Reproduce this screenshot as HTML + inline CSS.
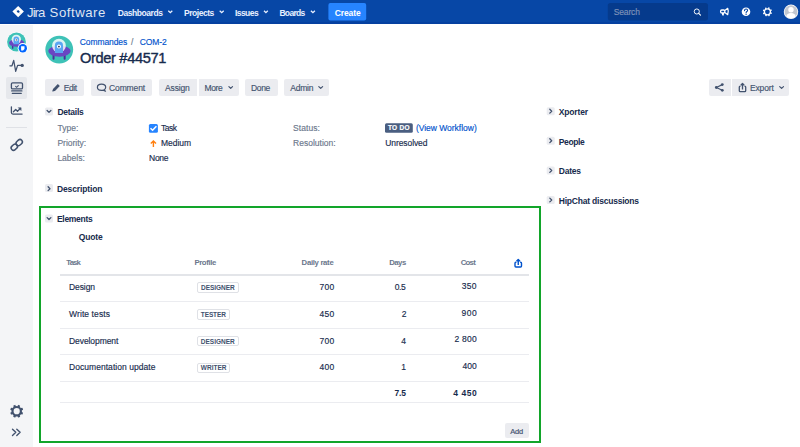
<!DOCTYPE html>
<html><head><meta charset="utf-8">
<style>
*{box-sizing:border-box;margin:0;padding:0}
html,body{width:800px;height:447px;overflow:hidden;background:#fff;font-family:"Liberation Sans",sans-serif;color:#172B4D}
.t{position:absolute;white-space:nowrap}
.r{position:absolute}
.btn{position:absolute;top:79px;height:17px;background:#EBECF0;border-radius:2px}
.chev{position:absolute;width:8px;height:8px;background:#EBECF0;border-radius:1.5px}
.hr{position:absolute;left:60px;width:468.5px;height:1px;background:#EBECF0}
.lz{position:absolute;left:197.3px;height:10.6px;border:1px solid #DFE1E6;border-radius:2px;background:#fff}
svg{position:absolute;overflow:visible}
</style></head><body>
<!-- nav -->
<div class="r" style="left:0;top:0;width:800px;height:24px;background:#0747A6"></div>
<div class="r" style="left:0;top:22.3px;width:800px;height:1.5px;background:#0540A0"></div>
<svg style="left:0;top:0" width="800" height="24">
  <path d="M18.15 5.9 L23.9 11.55 L18.15 17.2 L12.4 11.55 Z M18.2 9.95 L16.6 11.5 L18.2 13.05 L19.8 11.5 Z" fill="#fff" fill-rule="evenodd"/><path d="M15.3 8.7 L18.2 11.5 L21 14.4" stroke="#0747A6" stroke-opacity="0.18" stroke-width="0.8"/>
  <path d="M168.3 10.7 L170.3 12.7 L172.3 10.7 M219.7 10.7 L221.7 12.7 L223.7 10.7 M264 10.7 L265.9 12.6 L267.8 10.7 M310.9 10.7 L312.9 12.7 L314.9 10.7" stroke="#E9F0FF" stroke-width="1.3" fill="none"/>
  <rect x="328.4" y="3" width="37.8" height="17.5" rx="2" fill="#2684FF"/>
  <rect x="607.8" y="3" width="100.2" height="17.5" rx="2.5" fill="#053A8C"/>
  <circle cx="696.8" cy="11.5" r="2.55" stroke="#fff" stroke-width="0.95" fill="none"/>
  <path d="M698.7 13.4 L700.5 15.2" stroke="#fff" stroke-width="1.15" stroke-linecap="round"/>
  <!-- megaphone -->
  <rect x="720.6" y="10" width="4.2" height="2.9" rx="1.2" stroke="#fff" stroke-width="1.3" fill="none"/>
  <path d="M721.6 12.9 L722.3 15.6 L723.8 15.6 L724 12.9 Z" fill="#fff"/>
  <path d="M724.9 10.4 L727.7 8.3 Q729 11.5 727.7 14.7 L724.9 12.6" stroke="#fff" stroke-width="1.2" fill="none" stroke-linejoin="round"/>
  <!-- help -->
  <circle cx="746" cy="11.8" r="4.3" fill="#fff"/>
  <path d="M744.5 10.6 Q744.6 9 746.1 9 Q747.6 9 747.6 10.4 Q747.6 11.3 746.4 11.8 L746.1 12.9" stroke="#0747A6" stroke-width="1.1" fill="none" stroke-linecap="round"/>
  <circle cx="746.1" cy="14.4" r="0.6" fill="#0747A6"/>
  <!-- gear -->
  <circle cx="767.4" cy="11.8" r="3.0" stroke="#fff" stroke-width="1.25" fill="none"/><rect x="770.25" y="12.48" width="1.5" height="1.5" rx="0.5" transform="rotate(22.5 771.10 13.33)" fill="#fff"/><rect x="768.08" y="14.65" width="1.5" height="1.5" rx="0.5" transform="rotate(67.5 768.93 15.50)" fill="#fff"/><rect x="765.02" y="14.65" width="1.5" height="1.5" rx="0.5" transform="rotate(112.5 765.87 15.50)" fill="#fff"/><rect x="762.85" y="12.48" width="1.5" height="1.5" rx="0.5" transform="rotate(157.5 763.70 13.33)" fill="#fff"/><rect x="762.85" y="9.42" width="1.5" height="1.5" rx="0.5" transform="rotate(202.5 763.70 10.27)" fill="#fff"/><rect x="765.02" y="7.25" width="1.5" height="1.5" rx="0.5" transform="rotate(247.5 765.87 8.10)" fill="#fff"/><rect x="768.08" y="7.25" width="1.5" height="1.5" rx="0.5" transform="rotate(292.5 768.93 8.10)" fill="#fff"/><rect x="770.25" y="9.42" width="1.5" height="1.5" rx="0.5" transform="rotate(337.5 771.10 10.27)" fill="#fff"/>
  <!-- avatar -->
  <circle cx="791" cy="11.8" r="7.2" fill="#fff"/>
  <circle cx="791" cy="11.8" r="6.5" fill="#C1C7D0"/>
  <clipPath id="avc"><circle cx="791" cy="11.8" r="6.5"/></clipPath>
  <g clip-path="url(#avc)" fill="#fff"><circle cx="791" cy="9.8" r="2.7"/><ellipse cx="791" cy="17.5" rx="5" ry="4.5"/></g>
</svg>
<!-- sidebar -->
<div class="r" style="left:0;top:25px;width:33px;height:422px;background:#F4F5F7"></div>
<div class="r" style="left:6.2px;top:77px;width:20.6px;height:22.3px;background:#E6E8EC;border-radius:2px"></div>
<div class="r" style="left:6px;top:127px;width:21.2px;height:1px;background:#DFE1E6"></div>
<svg style="left:0;top:0" width="33" height="447">
  <!-- project avatar -->
  <circle cx="16.5" cy="42" r="9.9" fill="#fff"/>
  <circle cx="16.5" cy="42" r="9.4" fill="#3EC2B7"/>
  <path d="M12.65 45.58 L12.65 48.15 M20.15 45.58 L20.15 48.15" stroke="#4A2E9A" stroke-width="1.4" stroke-linecap="round"/>
  <ellipse cx="16.64" cy="43.01" rx="7.57" ry="3.79" fill="#6A45C2"/>
  <circle cx="16.30" cy="39.36" r="4.67" fill="#fff" fill-opacity="0.82"/>
  <path d="M13.52 44.23 L13.52 39.36 Q13.52 36.52 16.30 36.52 Q19.07 36.52 19.07 39.36 L19.07 44.23 Z" fill="#5AA6F2"/>
  <circle cx="16.30" cy="39.97" r="1.35" fill="#fff"/>
  <circle cx="16.30" cy="39.97" r="0.64" fill="#253858"/>
  <circle cx="22.8" cy="48.2" r="5.1" fill="#fff"/>
  <circle cx="22.8" cy="48.2" r="4.2" fill="#0065FF"/>
  <path d="M21.1 46.2 L24.5 46.2 L24.5 48.9 L23 50.4 L21.1 50.4 Z" fill="#fff"/>
  <!-- pulse -->
  <path d="M9.9 65.8 L12 65.8 L13.7 60.4 L15.7 71.3 L17.6 65.4 L21.5 65.4" stroke="#42526E" stroke-width="1.25" fill="none" stroke-linejoin="round" stroke-linecap="round"/>
  <circle cx="22.2" cy="65.4" r="1.65" fill="#42526E"/>
  <!-- board -->
  <rect x="11.4" y="82.9" width="11.1" height="6" rx="1.2" stroke="#42526E" stroke-width="1.3" fill="none"/>
  <path d="M15.3 86.2 L16.6 87.3 L18.6 85.3" stroke="#42526E" stroke-width="1.1" fill="none"/>
  <path d="M11.7 90.9 L21.9 90.9 M12.3 93.3 L21.3 93.3" stroke="#42526E" stroke-width="1.3" stroke-linecap="round"/>
  <!-- chart -->
  <path d="M11.4 106.8 L11.4 112.6 Q11.4 114.1 12.9 114.1 L22.1 114.1" stroke="#42526E" stroke-width="1.3" fill="none" stroke-linecap="round"/>
  <path d="M13.4 111.7 L15.7 109.5 L17.5 111.2 L19.8 109" stroke="#42526E" stroke-width="1.3" fill="none" stroke-linejoin="round" stroke-linecap="round"/>
  <path d="M18.3 107.7 L21.1 107.7 L21.1 110.5 Z" fill="#42526E" stroke="#42526E" stroke-width="0.5" stroke-linejoin="round"/>
  <!-- link -->
  <g stroke="#42526E" stroke-width="1.5" fill="none">
    <rect x="15.8" y="140.2" width="6.8" height="4.8" rx="2.4" transform="rotate(-42 19.2 142.6)"/>
    <rect x="10.9" y="144.8" width="6.8" height="4.8" rx="2.4" transform="rotate(-42 14.3 147.2)"/>
  </g>
  <!-- gear -->
  <circle cx="16.7" cy="411.2" r="4.2" stroke="#42526E" stroke-width="2.2" fill="none"/><rect x="20.54" y="412.12" width="2.3" height="2.3" rx="0.5" transform="rotate(22.5 21.69 413.27)" fill="#42526E"/><rect x="17.62" y="415.04" width="2.3" height="2.3" rx="0.5" transform="rotate(67.5 18.77 416.19)" fill="#42526E"/><rect x="13.48" y="415.04" width="2.3" height="2.3" rx="0.5" transform="rotate(112.5 14.63 416.19)" fill="#42526E"/><rect x="10.56" y="412.12" width="2.3" height="2.3" rx="0.5" transform="rotate(157.5 11.71 413.27)" fill="#42526E"/><rect x="10.56" y="407.98" width="2.3" height="2.3" rx="0.5" transform="rotate(202.5 11.71 409.13)" fill="#42526E"/><rect x="13.48" y="405.06" width="2.3" height="2.3" rx="0.5" transform="rotate(247.5 14.63 406.21)" fill="#42526E"/><rect x="17.62" y="405.06" width="2.3" height="2.3" rx="0.5" transform="rotate(292.5 18.77 406.21)" fill="#42526E"/><rect x="20.54" y="407.98" width="2.3" height="2.3" rx="0.5" transform="rotate(337.5 21.69 409.13)" fill="#42526E"/>
  <!-- chevrons -->
  <path d="M12.5 429.2 L15.8 432.3 L12.5 435.4 M16.8 429.2 L20.1 432.3 L16.8 435.4" stroke="#42526E" stroke-width="1.4" fill="none" stroke-linecap="round" stroke-linejoin="round"/>
</svg>
<!-- header avatar -->
<svg style="left:0;top:0" width="100" height="80">
  <circle cx="59.25" cy="49.6" r="13.9" fill="#3EC2B7"/>
  <path d="M53.55 54.90 L53.55 58.70 M64.65 54.90 L64.65 58.70" stroke="#4A2E9A" stroke-width="2.0" stroke-linecap="round"/>
  <ellipse cx="59.45" cy="51.10" rx="11.20" ry="5.60" fill="#6A45C2"/>
  <circle cx="58.95" cy="45.70" r="6.90" fill="#fff" fill-opacity="0.82"/>
  <path d="M54.85 52.90 L54.85 45.70 Q54.85 41.50 58.95 41.50 Q63.05 41.50 63.05 45.70 L63.05 52.90 Z" fill="#5AA6F2"/>
  <circle cx="58.95" cy="46.60" r="2.00" fill="#fff"/>
  <circle cx="58.95" cy="46.60" r="0.95" fill="#253858"/>
</svg>
<!-- buttons -->
<div class="btn" style="left:45.2px;width:39px"></div>
<div class="btn" style="left:91px;width:61.2px"></div>
<div class="btn" style="left:159.3px;width:37.5px;border-radius:2px 0 0 2px"></div>
<div class="btn" style="left:198.5px;width:40px;border-radius:0 2px 2px 0"></div>
<div class="btn" style="left:245px;width:32.5px"></div>
<div class="btn" style="left:284px;width:44.7px"></div>
<div class="btn" style="left:708.5px;width:22px;border-radius:2px 0 0 2px"></div>
<div class="btn" style="left:732.2px;width:56.8px;border-radius:0 2px 2px 0"></div>
<svg style="left:0;top:0" width="800" height="447">
  <!-- pencil -->
  <path d="M52.6 91.2 L53 88.9 L57.8 84.1 L59.8 86.1 L55 90.9 Z" fill="#42526E"/>
  <path d="M52.3 91.6 L53.2 89 L55.1 90.8 Z" fill="#42526E"/>
  <!-- comment bubble -->
  <path d="M104 90 Q105.7 89 105.7 87.3 Q105.7 84.2 101.5 84.2 Q97.4 84.2 97.4 87.3 Q97.4 90.4 101.5 90.4 Q102.5 90.4 103.2 90.2 L105.5 91.2 Z" stroke="#42526E" stroke-width="1.2" fill="none" stroke-linejoin="round"/>
  <g stroke="#42526E" stroke-width="1.2" fill="none" stroke-linecap="round" stroke-linejoin="round">
    <path d="M228.9 86.6 L230.7 88.4 L232.5 86.6"/>
    <path d="M318.8 86.6 L320.7 88.4 L322.6 86.6"/>
    <path d="M779.7 86.6 L781.6 88.4 L783.5 86.6"/>
  </g>
  <!-- share -->
  <g fill="#42526E"><circle cx="716.3" cy="87.5" r="1.4"/><circle cx="722.3" cy="84.6" r="1.4"/><circle cx="722.3" cy="90.3" r="1.4"/></g>
  <path d="M716.3 87.5 L722.3 84.6 M716.3 87.5 L722.3 90.3" stroke="#42526E" stroke-width="1.2"/>
  <!-- export -->
  <path d="M740.6 86.2 L740.2 86.2 Q739.3 86.2 739.3 87.1 L739.3 90.7 Q739.3 91.6 740.2 91.6 L744.8 91.6 Q745.7 91.6 745.7 90.7 L745.7 87.1 Q745.7 86.2 744.8 86.2 L744.4 86.2" stroke="#42526E" stroke-width="1.3" fill="none"/>
  <path d="M742.5 89.6 L742.5 83.5 M740.8 85.2 L742.5 83.4 L744.2 85.2" stroke="#42526E" stroke-width="1.3" fill="none" stroke-linejoin="round"/>
  <!-- section chevrons -->
  <rect x="45" y="107.4" width="8" height="8" rx="1.5" fill="#EBECF0"/>
  <rect x="45" y="184.1" width="8" height="8" rx="1.5" fill="#EBECF0"/>
  <rect x="45" y="214.5" width="8" height="8" rx="1.5" fill="#EBECF0"/>
  <rect x="546.7" y="107.2" width="8" height="8" rx="1.5" fill="#EBECF0"/>
  <rect x="546.7" y="136.7" width="8" height="8" rx="1.5" fill="#EBECF0"/>
  <rect x="546.7" y="166.5" width="8" height="8" rx="1.5" fill="#EBECF0"/>
  <rect x="546.7" y="196" width="8" height="8" rx="1.5" fill="#EBECF0"/>
  <g stroke="#42526E" stroke-width="1.3" fill="none" stroke-linecap="round" stroke-linejoin="round">
    <path d="M47.1 110.5 L49.0 112.4 L50.9 110.5"/>
    <path d="M47.1 217.6 L49.0 219.5 L50.9 217.6"/>
    <path d="M48.1 186.8 L50.0 188.7 L48.1 190.6"/>
    <path d="M549.8 109.3 L551.7 111.2 L549.8 113.1"/>
    <path d="M549.8 138.8 L551.7 140.7 L549.8 142.6"/>
    <path d="M549.8 168.6 L551.7 170.5 L549.8 172.4"/>
    <path d="M549.8 198.1 L551.7 200.0 L549.8 201.9"/>
  </g>
  <!-- checkbox -->
  <rect x="148.9" y="124" width="9" height="8.8" rx="1.5" fill="#2684FF"/>
  <path d="M150.5 128.2 L152.6 130.3 L156.4 126.3" stroke="#fff" stroke-width="1.5" fill="none"/>
  <!-- arrow -->
  <path d="M153.4 147 L153.4 140.9 M150.8 143.5 L153.4 140.9 L156 143.5" stroke="#FF7F0E" stroke-width="1.4" fill="none"/>
  <!-- lozenge -->
  <rect x="385" y="123.3" width="27.8" height="9.4" rx="1.5" fill="#4A5E80"/>
  <!-- table export icon -->
  <path d="M516.4 262.3 L515.9 262.3 Q515 262.3 515 263.2 L515 266.1 Q515 267 515.9 267 L520.6 267 Q521.5 267 521.5 266.1 L521.5 263.2 Q521.5 262.3 520.6 262.3 L520.1 262.3" stroke="#0052CC" stroke-width="1.4" fill="none"/>
  <path d="M518.25 265 L518.25 259.6 M516.5 261.3 L518.25 259.5 L520 261.3" stroke="#0052CC" stroke-width="1.4" fill="none" stroke-linejoin="round"/>
</svg>
<!-- elements box -->
<div class="r" style="left:39px;top:206px;width:502px;height:237px;border:2px solid #12A52A"></div>
<!-- table -->
<div class="r" style="left:60px;top:274px;width:468.5px;height:1.5px;background:#E3E5E9"></div>
<div class="hr" style="top:301px"></div>
<div class="hr" style="top:328px"></div>
<div class="hr" style="top:354px"></div>
<div class="hr" style="top:381px"></div>
<div class="hr" style="top:402px"></div>
<div class="lz" style="top:282.4px;width:41.3px"></div>
<div class="lz" style="top:309.2px;width:32.5px"></div>
<div class="lz" style="top:335.7px;width:41.4px"></div>
<div class="lz" style="top:362.5px;width:33.1px"></div>
<div class="r" style="left:505px;top:423.3px;width:23.9px;height:15.1px;background:#EBECF0;border-radius:2px"></div>
<!-- the re-render text layer -->
<div class="t" style="left:27.10px;top:6.01px;font-size:13.2px;line-height:13.2px;font-weight:normal;color:rgba(255,255,255,0.88);letter-spacing:-1.038px;-webkit-text-stroke:0">Jira<i style="display:inline-block;width:0;height:0"></i></div>
<div class="t" style="left:49.60px;top:6.01px;font-size:13.2px;line-height:13.2px;font-weight:normal;color:rgba(255,255,255,0.88);letter-spacing:0.528px;-webkit-text-stroke:0">Software<i style="display:inline-block;width:0;height:0"></i></div>
<div class="t" style="left:117.80px;top:9.01px;font-size:8.5px;line-height:8.5px;font-weight:bold;color:#E9F0FF;letter-spacing:-0.444px;">Dashboards<i style="display:inline-block;width:0;height:0"></i></div>
<div class="t" style="left:184.00px;top:9.01px;font-size:8.5px;line-height:8.5px;font-weight:bold;color:#E9F0FF;letter-spacing:-0.474px;">Projects<i style="display:inline-block;width:0;height:0"></i></div>
<div class="t" style="left:234.90px;top:9.01px;font-size:8.5px;line-height:8.5px;font-weight:bold;color:#E9F0FF;letter-spacing:-0.547px;">Issues<i style="display:inline-block;width:0;height:0"></i></div>
<div class="t" style="left:279.40px;top:9.01px;font-size:8.5px;line-height:8.5px;font-weight:bold;color:#E9F0FF;letter-spacing:-0.672px;">Boards<i style="display:inline-block;width:0;height:0"></i></div>
<div class="t" style="left:334.70px;top:9.01px;font-size:8.5px;line-height:8.5px;font-weight:bold;color:#FFFFFF;letter-spacing:-0.106px;">Create<i style="display:inline-block;width:0;height:0"></i></div>
<div class="t" style="left:613.80px;top:8.01px;font-size:8.5px;line-height:8.5px;font-weight:normal;color:#7F92B8;letter-spacing:-0.161px;-webkit-text-stroke:0.15px #7F92B8">Search<i style="display:inline-block;width:0;height:0"></i></div>
<div class="t" style="left:79.75px;top:38.01px;font-size:8.5px;line-height:8.5px;font-weight:normal;color:#0052CC;letter-spacing:-0.086px;-webkit-text-stroke:0.15px #0052CC">Commandes<i style="display:inline-block;width:0;height:0"></i></div>
<div class="t" style="left:131.00px;top:38.01px;font-size:8.5px;line-height:8.5px;font-weight:normal;color:#6B778C;letter-spacing:0.000px;-webkit-text-stroke:0.15px #6B778C">/<i style="display:inline-block;width:0;height:0"></i></div>
<div class="t" style="left:139.75px;top:38.01px;font-size:8.5px;line-height:8.5px;font-weight:normal;color:#0052CC;letter-spacing:-0.103px;-webkit-text-stroke:0.15px #0052CC">COM-2<i style="display:inline-block;width:0;height:0"></i></div>
<div class="t" style="left:80.00px;top:51.01px;font-size:14.6px;line-height:14.6px;font-weight:normal;color:#172B4D;letter-spacing:-0.335px;-webkit-text-stroke:0.4px #172B4D">Order #44571<i style="display:inline-block;width:0;height:0"></i></div>
<div class="t" style="left:63.80px;top:84.01px;font-size:8.5px;line-height:8.5px;font-weight:normal;color:#42526E;letter-spacing:-0.428px;-webkit-text-stroke:0.15px #42526E">Edit<i style="display:inline-block;width:0;height:0"></i></div>
<div class="t" style="left:109.00px;top:84.01px;font-size:8.5px;line-height:8.5px;font-weight:normal;color:#42526E;letter-spacing:-0.114px;-webkit-text-stroke:0.15px #42526E">Comment<i style="display:inline-block;width:0;height:0"></i></div>
<div class="t" style="left:165.10px;top:84.01px;font-size:8.5px;line-height:8.5px;font-weight:normal;color:#42526E;letter-spacing:-0.157px;-webkit-text-stroke:0.15px #42526E">Assign<i style="display:inline-block;width:0;height:0"></i></div>
<div class="t" style="left:204.50px;top:84.01px;font-size:8.5px;line-height:8.5px;font-weight:normal;color:#42526E;letter-spacing:-0.379px;-webkit-text-stroke:0.15px #42526E">More<i style="display:inline-block;width:0;height:0"></i></div>
<div class="t" style="left:251.00px;top:84.01px;font-size:8.5px;line-height:8.5px;font-weight:normal;color:#42526E;letter-spacing:-0.331px;-webkit-text-stroke:0.15px #42526E">Done<i style="display:inline-block;width:0;height:0"></i></div>
<div class="t" style="left:290.25px;top:84.01px;font-size:8.5px;line-height:8.5px;font-weight:normal;color:#42526E;letter-spacing:-0.216px;-webkit-text-stroke:0.15px #42526E">Admin<i style="display:inline-block;width:0;height:0"></i></div>
<div class="t" style="left:750.00px;top:84.01px;font-size:8.5px;line-height:8.5px;font-weight:normal;color:#42526E;letter-spacing:-0.161px;-webkit-text-stroke:0.15px #42526E">Export<i style="display:inline-block;width:0;height:0"></i></div>
<div class="t" style="left:57.40px;top:108.01px;font-size:8.5px;line-height:8.5px;font-weight:bold;color:#172B4D;letter-spacing:-0.258px;">Details<i style="display:inline-block;width:0;height:0"></i></div>
<div class="t" style="left:57.40px;top:124.01px;font-size:8.5px;line-height:8.5px;font-weight:normal;color:#6B778C;letter-spacing:0.043px;-webkit-text-stroke:0.15px #6B778C">Type:<i style="display:inline-block;width:0;height:0"></i></div>
<div class="t" style="left:57.40px;top:139.01px;font-size:8.5px;line-height:8.5px;font-weight:normal;color:#6B778C;letter-spacing:0.000px;-webkit-text-stroke:0.15px #6B778C">Priority:<i style="display:inline-block;width:0;height:0"></i></div>
<div class="t" style="left:57.40px;top:154.00px;font-size:8.5px;line-height:8.5px;font-weight:normal;color:#6B778C;letter-spacing:0.000px;-webkit-text-stroke:0.15px #6B778C">Labels:<i style="display:inline-block;width:0;height:0"></i></div>
<div class="t" style="left:161.00px;top:124.01px;font-size:8.5px;line-height:8.5px;font-weight:normal;color:#172B4D;letter-spacing:-0.476px;-webkit-text-stroke:0.15px #172B4D">Task<i style="display:inline-block;width:0;height:0"></i></div>
<div class="t" style="left:161.00px;top:139.01px;font-size:8.5px;line-height:8.5px;font-weight:normal;color:#172B4D;letter-spacing:-0.030px;-webkit-text-stroke:0.15px #172B4D">Medium<i style="display:inline-block;width:0;height:0"></i></div>
<div class="t" style="left:149.10px;top:154.01px;font-size:8.5px;line-height:8.5px;font-weight:normal;color:#172B4D;letter-spacing:-0.298px;-webkit-text-stroke:0.15px #172B4D">None<i style="display:inline-block;width:0;height:0"></i></div>
<div class="t" style="left:293.00px;top:124.01px;font-size:8.5px;line-height:8.5px;font-weight:normal;color:#6B778C;letter-spacing:0.067px;-webkit-text-stroke:0.15px #6B778C">Status:<i style="display:inline-block;width:0;height:0"></i></div>
<div class="t" style="left:293.00px;top:139.01px;font-size:8.5px;line-height:8.5px;font-weight:normal;color:#6B778C;letter-spacing:0.009px;-webkit-text-stroke:0.15px #6B778C">Resolution:<i style="display:inline-block;width:0;height:0"></i></div>
<div class="t" style="left:415.90px;top:124.00px;font-size:8.5px;line-height:8.5px;font-weight:normal;color:#0052CC;letter-spacing:-0.018px;-webkit-text-stroke:0.15px #0052CC">(View Workflow)<i style="display:inline-block;width:0;height:0"></i></div>
<div class="t" style="left:385.25px;top:139.01px;font-size:8.5px;line-height:8.5px;font-weight:normal;color:#172B4D;letter-spacing:-0.085px;-webkit-text-stroke:0.15px #172B4D">Unresolved<i style="display:inline-block;width:0;height:0"></i></div>
<div class="t" style="left:388.00px;top:125.01px;font-size:6.5px;line-height:6.5px;font-weight:bold;color:#FFFFFF;letter-spacing:0.248px;-webkit-text-stroke:0.2px #fff">TO DO<i style="display:inline-block;width:0;height:0"></i></div>
<div class="t" style="left:57.00px;top:185.01px;font-size:8.5px;line-height:8.5px;font-weight:bold;color:#172B4D;letter-spacing:-0.132px;">Description<i style="display:inline-block;width:0;height:0"></i></div>
<div class="t" style="left:57.00px;top:215.01px;font-size:8.5px;line-height:8.5px;font-weight:bold;color:#172B4D;letter-spacing:-0.309px;">Elements<i style="display:inline-block;width:0;height:0"></i></div>
<div class="t" style="left:78.70px;top:233.01px;font-size:8.5px;line-height:8.5px;font-weight:bold;color:#172B4D;letter-spacing:-0.157px;">Quote<i style="display:inline-block;width:0;height:0"></i></div>
<div class="t" style="left:558.75px;top:108.01px;font-size:8.5px;line-height:8.5px;font-weight:bold;color:#172B4D;letter-spacing:-0.153px;">Xporter<i style="display:inline-block;width:0;height:0"></i></div>
<div class="t" style="left:558.75px;top:138.01px;font-size:8.5px;line-height:8.5px;font-weight:bold;color:#172B4D;letter-spacing:-0.379px;">People<i style="display:inline-block;width:0;height:0"></i></div>
<div class="t" style="left:558.75px;top:167.01px;font-size:8.5px;line-height:8.5px;font-weight:bold;color:#172B4D;letter-spacing:-0.231px;">Dates<i style="display:inline-block;width:0;height:0"></i></div>
<div class="t" style="left:558.75px;top:197.01px;font-size:8.5px;line-height:8.5px;font-weight:bold;color:#172B4D;letter-spacing:-0.211px;">HipChat discussions<i style="display:inline-block;width:0;height:0"></i></div>
<div class="t" style="left:66.30px;top:259.01px;font-size:7.75px;line-height:7.75px;font-weight:bold;color:#6B778C;letter-spacing:-0.826px;">Task<i style="display:inline-block;width:0;height:0"></i></div>
<div class="t" style="left:194.40px;top:259.01px;font-size:7.75px;line-height:7.75px;font-weight:bold;color:#6B778C;letter-spacing:-0.368px;">Profile<i style="display:inline-block;width:0;height:0"></i></div>
<div class="t" style="left:301.60px;top:259.01px;font-size:7.75px;line-height:7.75px;font-weight:bold;color:#6B778C;letter-spacing:-0.309px;">Daily rate<i style="display:inline-block;width:0;height:0"></i></div>
<div class="t" style="left:389.20px;top:259.01px;font-size:7.75px;line-height:7.75px;font-weight:bold;color:#6B778C;letter-spacing:-0.506px;">Days<i style="display:inline-block;width:0;height:0"></i></div>
<div class="t" style="left:460.70px;top:259.01px;font-size:7.75px;line-height:7.75px;font-weight:bold;color:#6B778C;letter-spacing:-0.714px;">Cost<i style="display:inline-block;width:0;height:0"></i></div>
<div class="t" style="left:69.00px;top:283.01px;font-size:8.5px;line-height:8.5px;font-weight:normal;color:#172B4D;letter-spacing:-0.086px;-webkit-text-stroke:0.15px #172B4D">Design<i style="display:inline-block;width:0;height:0"></i></div>
<div class="t" style="left:69.00px;top:310.01px;font-size:8.5px;line-height:8.5px;font-weight:normal;color:#172B4D;letter-spacing:0.096px;-webkit-text-stroke:0.15px #172B4D">Write tests<i style="display:inline-block;width:0;height:0"></i></div>
<div class="t" style="left:69.00px;top:337.01px;font-size:8.5px;line-height:8.5px;font-weight:normal;color:#172B4D;letter-spacing:-0.072px;-webkit-text-stroke:0.15px #172B4D">Development<i style="display:inline-block;width:0;height:0"></i></div>
<div class="t" style="left:69.00px;top:363.00px;font-size:8.5px;line-height:8.5px;font-weight:normal;color:#172B4D;letter-spacing:0.047px;-webkit-text-stroke:0.15px #172B4D">Documentation update<i style="display:inline-block;width:0;height:0"></i></div>
<div class="t" style="left:319.60px;top:283.01px;font-size:8.5px;line-height:8.5px;font-weight:normal;color:#172B4D;letter-spacing:0.173px;-webkit-text-stroke:0.15px #172B4D">700<i style="display:inline-block;width:0;height:0"></i></div>
<div class="t" style="left:319.50px;top:310.01px;font-size:8.5px;line-height:8.5px;font-weight:normal;color:#172B4D;letter-spacing:0.223px;-webkit-text-stroke:0.15px #172B4D">450<i style="display:inline-block;width:0;height:0"></i></div>
<div class="t" style="left:319.60px;top:337.01px;font-size:8.5px;line-height:8.5px;font-weight:normal;color:#172B4D;letter-spacing:0.173px;-webkit-text-stroke:0.15px #172B4D">700<i style="display:inline-block;width:0;height:0"></i></div>
<div class="t" style="left:319.60px;top:363.01px;font-size:8.5px;line-height:8.5px;font-weight:normal;color:#172B4D;letter-spacing:0.173px;-webkit-text-stroke:0.15px #172B4D">400<i style="display:inline-block;width:0;height:0"></i></div>
<div class="t" style="left:394.70px;top:283.01px;font-size:8.5px;line-height:8.5px;font-weight:normal;color:#172B4D;letter-spacing:-0.344px;-webkit-text-stroke:0.15px #172B4D">0.5<i style="display:inline-block;width:0;height:0"></i></div>
<div class="t" style="left:401.70px;top:310.01px;font-size:8.5px;line-height:8.5px;font-weight:normal;color:#172B4D;letter-spacing:0.000px;-webkit-text-stroke:0.15px #172B4D">2<i style="display:inline-block;width:0;height:0"></i></div>
<div class="t" style="left:401.20px;top:337.01px;font-size:8.5px;line-height:8.5px;font-weight:normal;color:#172B4D;letter-spacing:0.000px;-webkit-text-stroke:0.15px #172B4D">4<i style="display:inline-block;width:0;height:0"></i></div>
<div class="t" style="left:401.20px;top:363.01px;font-size:8.5px;line-height:8.5px;font-weight:normal;color:#172B4D;letter-spacing:0.000px;-webkit-text-stroke:0.15px #172B4D">1<i style="display:inline-block;width:0;height:0"></i></div>
<div class="t" style="left:461.70px;top:282.01px;font-size:8.5px;line-height:8.5px;font-weight:normal;color:#172B4D;letter-spacing:0.323px;-webkit-text-stroke:0.15px #172B4D">350<i style="display:inline-block;width:0;height:0"></i></div>
<div class="t" style="left:461.50px;top:309.00px;font-size:8.5px;line-height:8.5px;font-weight:normal;color:#172B4D;letter-spacing:0.523px;-webkit-text-stroke:0.15px #172B4D">900<i style="display:inline-block;width:0;height:0"></i></div>
<div class="t" style="left:454.40px;top:335.01px;font-size:8.5px;line-height:8.5px;font-weight:normal;color:#172B4D;letter-spacing:0.264px;-webkit-text-stroke:0.15px #172B4D">2 800<i style="display:inline-block;width:0;height:0"></i></div>
<div class="t" style="left:462.55px;top:362.00px;font-size:8.5px;line-height:8.5px;font-weight:normal;color:#172B4D;letter-spacing:0.000px;-webkit-text-stroke:0.15px #172B4D">400<i style="display:inline-block;width:0;height:0"></i></div>
<div class="t" style="left:394.50px;top:389.01px;font-size:8.5px;line-height:8.5px;font-weight:bold;color:#172B4D;letter-spacing:-0.194px;">7.5<i style="display:inline-block;width:0;height:0"></i></div>
<div class="t" style="left:453.20px;top:389.01px;font-size:8.5px;line-height:8.5px;font-weight:bold;color:#172B4D;letter-spacing:0.564px;">4 450<i style="display:inline-block;width:0;height:0"></i></div>
<div class="t" style="left:201.00px;top:285.00px;font-size:6.5px;line-height:6.5px;font-weight:bold;color:#42526E;letter-spacing:-0.037px;">DESIGNER<i style="display:inline-block;width:0;height:0"></i></div>
<div class="t" style="left:200.80px;top:312.00px;font-size:6.5px;line-height:6.5px;font-weight:bold;color:#42526E;letter-spacing:-0.109px;">TESTER<i style="display:inline-block;width:0;height:0"></i></div>
<div class="t" style="left:200.80px;top:339.00px;font-size:6.5px;line-height:6.5px;font-weight:bold;color:#42526E;letter-spacing:-0.008px;">DESIGNER<i style="display:inline-block;width:0;height:0"></i></div>
<div class="t" style="left:200.80px;top:365.00px;font-size:6.5px;line-height:6.5px;font-weight:bold;color:#42526E;letter-spacing:0.012px;">WRITER<i style="display:inline-block;width:0;height:0"></i></div>
<div class="t" style="left:510.30px;top:428.01px;font-size:7.5px;line-height:7.5px;font-weight:normal;color:#42526E;letter-spacing:-0.187px;-webkit-text-stroke:0.15px #42526E">Add<i style="display:inline-block;width:0;height:0"></i></div>
</body></html>
